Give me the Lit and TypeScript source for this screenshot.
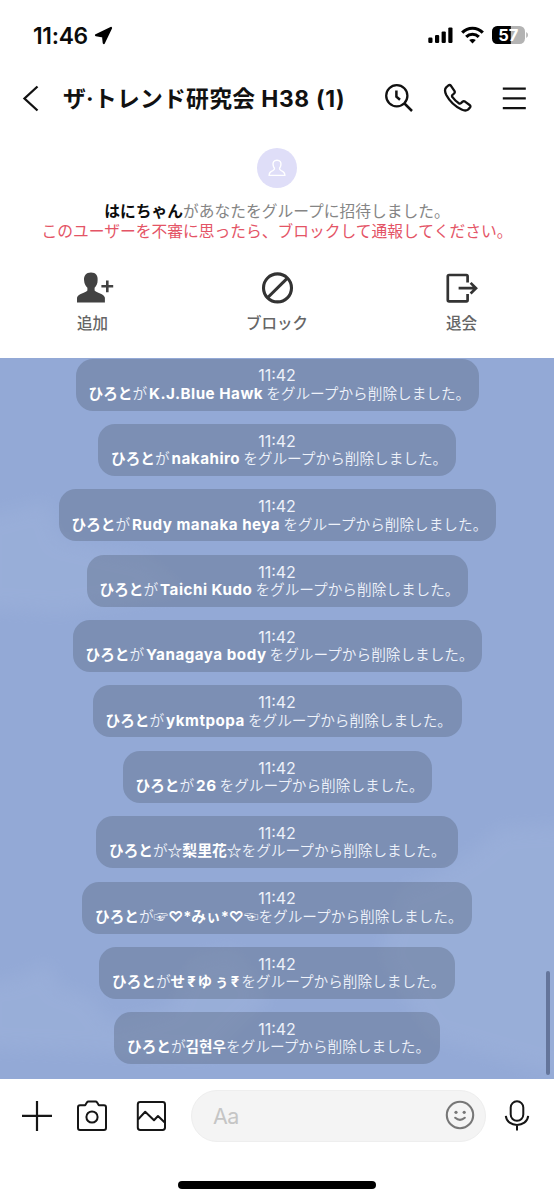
import { LitElement, html, css } from "lit";
import { customElement, property } from "lit/decorators.js";
import { classMap } from "lit/directives/class-map.js";

interface Removal {
  name: string;
  width: number;
  script: "latin" | "kanji" | "symbols" | "spaced" | "hangul";
}

const REMOVALS: Removal[] = [
  { name: "K.J.Blue Hawk", width: 403, script: "latin" },
  { name: "nakahiro", width: 358, script: "latin" },
  { name: "Rudy manaka heya", width: 437, script: "latin" },
  { name: "Taichi Kudo", width: 381, script: "latin" },
  { name: "Yanagaya body", width: 409, script: "latin" },
  { name: "ykmtpopa", width: 369, script: "latin" },
  { name: "26", width: 309, script: "latin" },
  { name: "☆梨里花☆", width: 362, script: "kanji" },
  { name: "☞♡*みぃ*♡☜", width: 390, script: "symbols" },
  { name: "せ₹ゆぅ₹", width: 356, script: "spaced" },
  { name: "김현우", width: 326, script: "hangul" },
];

@customElement("status-bar")
class StatusBar extends LitElement {
  static styles = css`
    :host { display: flex; justify-content: space-between; align-items: center; height: 70px; padding: 0 26px 0 33px; box-sizing: border-box; }
    .left, .right { display: flex; align-items: center; }
    .left { gap: 6px; }
    .right { gap: 8px; }
    .time { font: 600 22.8px/28px Inter, sans-serif; letter-spacing: -0.3px; color: #0b0b0b; padding-top: 1px; }
    svg { display: block; }
    .level { font: 700 16.5px Inter, sans-serif; }
  `;
  render() {
    return html`
      <div class="left">
        <span class="time">11:46</span>
        <svg width="19" height="19" viewBox="0 0 19 19"><path d="M17 2 L9.8 17 L9.1 10.3 L2 9.2 Z" fill="#000" stroke="#000" stroke-width="2.2" stroke-linejoin="round" /></svg>
      </div>
      <div class="right">
        <svg width="25" height="18" viewBox="0 0 25 18">
          <rect x="0.3" y="11.5" width="4.2" height="5.5" rx="1.2" /><rect x="7" y="8.9" width="4.2" height="8.1" rx="1.2" />
          <rect x="13.6" y="5.4" width="4.2" height="11.6" rx="1.2" /><rect x="20.3" y="1.4" width="4.2" height="15.6" rx="1.2" />
        </svg>
        <svg width="23" height="18" viewBox="0 0 23 18" fill="none" stroke="#000" stroke-width="3.2">
          <path d="M1.2 6.6 C7 0.8 16 0.8 21.8 6.6" /><path d="M5.2 10.8 C8.8 7.4 14.2 7.4 17.8 10.8" />
          <path d="M11.5 17.4 L8.2 14.1 C10 12.6 13 12.6 14.8 14.1 Z" fill="#000" stroke="none" />
        </svg>
        <svg width="36" height="18" viewBox="0 0 36 18">
          <defs><clipPath id="full"><rect x="0" y="0" width="33" height="18" rx="5.4" /></clipPath></defs>
          <g clip-path="url(#full)"><rect width="33" height="18" fill="#b3b3b3" /><rect width="18.8" height="18" fill="#000" /></g>
          <path d="M34.2 6 Q36 7 36 9 Q36 11 34.2 12 Z" fill="#b3b3b3" />
          <text class="level" x="16.3" y="15" text-anchor="middle" fill="#fff">57</text>
        </svg>
      </div>`;
  }
}

@customElement("chat-header")
class ChatHeader extends LitElement {
  static styles = css`
    :host { display: flex; align-items: center; height: 56px; padding: 0 27px 0 22px; box-sizing: border-box; }
    .title { margin: 0 auto 0 23px; padding-top: 2px; white-space: nowrap; color: #111; font: 700 22.8px/32px Inter, "Noto Sans CJK JP", sans-serif; letter-spacing: 0.25px; }
    .tag { letter-spacing: 0.65px; }
    .actions { display: flex; gap: 29px; align-items: center; }
    svg { display: block; fill: none; stroke: #111; stroke-width: 2.3; }
  `;
  render() {
    return html`
      <svg width="18" height="28" viewBox="0 0 18 28"><path d="M15.5 2.5 L2.5 14.5 L15.5 26.5" /></svg>
      <div class="title">ザ·トレンド研究会<span class="tag"> H38 (1)</span></div>
      <div class="actions">
        <svg width="30" height="30" viewBox="0 0 30 30">
          <circle cx="12.8" cy="12.8" r="10.6" /><path d="M20.5 20.5 L28 28" stroke-width="2.5" /><path d="M12.4 7.6 V13.6 L16 16.8" stroke-width="2.5" />
        </svg>
        <svg width="30" height="30" viewBox="0 0 30 30">
          <path stroke-linejoin="round" d="M3.2 4.4 L5.3 2.5 Q6.8 1.4 8 2.8 L11.4 7.8 Q12.3 9.4 11.1 10.5 L9.4 12 Q8.6 13 9.5 14.2 Q12.2 18 15.8 20.2 Q17 21 18 20.2 L19.6 18.7 Q20.7 17.8 22 18.6 L26.6 22 Q28.1 23.2 26.9 24.6 L25 26.6 Q22.6 28.4 18.6 26.5 Q8.4 21.6 3.3 12 Q0.8 7 3.2 4.4 Z" />
        </svg>
        <svg width="25" height="26" viewBox="0 0 25 26"><path d="M0.8 3.7 H23.8 M0.8 13.4 H23.8 M0.8 23.2 H23.8" stroke-width="2.2" /></svg>
      </div>`;
  }
}

@customElement("invite-panel")
class InvitePanel extends LitElement {
  static styles = css`
    :host { display: flex; flex-direction: column; align-items: center; height: 232px; padding-top: 22px; box-sizing: border-box; font-family: "Noto Sans CJK JP", sans-serif; }
    .avatar { width: 40px; height: 40px; border-radius: 50%; background: #dfdef8; display: grid; place-items: center; }
    .copy { margin-top: 13px; text-align: center; font-size: 15.75px; line-height: 20px; color: #858585; white-space: nowrap; }
    .copy b { color: #0c0c0c; font-weight: 700; }
    .warning { color: #e45466; }
    .actions { display: grid; grid-template-columns: repeat(3, 184.5px); margin-top: 28px; }
    .action { display: flex; flex-direction: column; align-items: center; gap: 5px; font-size: 15.5px; line-height: 24px; color: #666; font-weight: 500; }
    svg { display: block; }
  `;
  render() {
    return html`
      <div class="avatar">
        <svg width="18" height="18" viewBox="0 0 18 18" fill="none" stroke="#fff" stroke-width="1.4" stroke-linejoin="round">
          <path d="M9 1.2 C5.8 1.2 4.7 3.5 5.1 6 C5.3 7.5 5.8 8.4 6.5 9.2 C6.7 10.6 6.2 11 4.8 11.6 C2.4 12.5 1.2 13.4 1.1 16.4 H16.9 C16.8 13.4 15.6 12.5 13.2 11.6 C11.8 11 11.3 10.6 11.5 9.2 C12.2 8.4 12.7 7.5 12.9 6 C13.3 3.5 12.2 1.2 9 1.2 Z" />
        </svg>
      </div>
      <div class="copy">
        <div><b>はにちゃん</b>があなたをグループに招待しました。</div>
        <div class="warning">このユーザーを不審に思ったら、ブロックして通報してください。</div>
      </div>
      <div class="actions">
        <div class="action">
          <svg width="44" height="36" viewBox="0 0 44 36">
            <path fill="#424242" d="M20 3.5 C15 3.5 12.6 7 13.1 11.5 C13.3 14.5 14.4 16.9 16.4 18.8 V21.5 C15.2 23.8 6.5 24.7 6 28.8 V33.6 H33.9 V28.8 C33.4 24.7 25.1 23.8 23.6 21.5 V18.8 C25.5 16.9 26.6 14.5 26.6 11.5 C27.1 7 25 3.5 20 3.5 Z" />
            <path stroke="#424242" stroke-width="2.6" d="M30.4 17.3 H42.2 M36.3 11.4 V23.2" />
          </svg>追加
        </div>
        <div class="action">
          <svg width="36" height="36" viewBox="0 0 36 36" fill="none" stroke="#333" stroke-width="3.1"><circle cx="18.5" cy="18.9" r="14" /><path d="M8.8 28.5 L28.4 9.1" /></svg>ブロック
        </div>
        <div class="action">
          <svg width="36" height="36" viewBox="0 0 36 36" fill="none" stroke="#333" stroke-width="2.7">
            <path stroke-linejoin="round" d="M23.6 13.6 V7.2 Q23.6 6 22.4 6 H5.1 Q3.8 6 3.8 7.2 V31 Q3.8 32.3 5.1 32.3 H22.4 Q23.6 32.3 23.6 31 V25" />
            <path d="M14.6 19.2 H32 M26.6 13.9 L32 19.2 L26.6 24.5" />
          </svg>退会
        </div>
      </div>`;
  }
}

@customElement("system-notice")
class SystemNotice extends LitElement {
  @property({ attribute: false }) item!: Removal;
  static styles = css`
    :host { display: flex; justify-content: center; }
    .pill { height: 52px; box-sizing: border-box; padding: 7.8px 0 0 13px; border-radius: 17px; background: rgba(82, 97, 120, 0.36); color: #eef2fa; font: 400 14.65px/18.3px Inter, "Noto Sans CJK JP", "Noto Sans CJK KR", "DejaVu Sans", sans-serif; white-space: nowrap; }
    .time { text-align: center; margin-left: -13px; font-size: 16px; }
    .body { font-weight: 350; }
    b { font-weight: 700; color: #fff; }
    .latin { margin: 0 3px 0 2px; font-size: 15.2px; letter-spacing: 0.5px; }
    .kanji { font-family: "Noto Sans CJK JP", sans-serif; font-size: 14.8px; line-height: 1; }
    .spaced { letter-spacing: 2px; }
    .symbols { letter-spacing: 0; }
  `;
  render() {
    const { name, width, script } = this.item;
    return html`<div class="pill" style="width:${width}px">
      <div class="time">11:42</div>
      <div class="body"><b>ひろと</b>が<b class=${classMap({ [script]: true })}>${name}</b>をグループから削除しました。</div>
    </div>`;
  }
}

@customElement("message-bar")
class MessageBar extends LitElement {
  static styles = css`
    :host { display: flex; flex-direction: column; align-items: center; height: 121px; padding-top: 11px; box-sizing: border-box; background: #fff; }
    .row { display: flex; align-items: center; width: 100%; box-sizing: border-box; padding: 0 22px; }
    .tools { display: flex; gap: 25px; }
    .field { display: flex; align-items: center; justify-content: space-between; width: 295px; height: 52px; box-sizing: border-box; margin-left: 25px; padding: 0 10.5px 2px 21px; border: 1px solid #eee; border-radius: 26px; background: #f4f4f4; }
    .hint { color: #c5c5c5; font: 400 21.5px/28px Inter, sans-serif; letter-spacing: -0.6px; padding-top: 2px; }
    .mic { margin-left: auto; }
    .home { width: 198px; height: 7.5px; border-radius: 4px; background: #000; margin-top: 39px; }
    svg { display: block; fill: none; stroke: #161616; stroke-width: 2; stroke-linejoin: round; }
    .smile { stroke: #777; stroke-width: 2.1; }
  `;
  render() {
    return html`
      <div class="row">
        <div class="tools">
          <svg width="30" height="32" viewBox="0 0 30 32"><path d="M15 1 V31 M0 15.8 H30" stroke-width="2.2" /></svg>
          <svg width="30" height="32" viewBox="0 0 30 32"><path d="M3 5.2 H8.2 L10 2.3 Q10.5 1.6 11.4 1.6 H18.6 Q19.5 1.6 20 2.3 L21.8 5.2 H27 Q29 5.2 29 7.2 V28 Q29 30 27 30 H3 Q1 30 1 28 V7.2 Q1 5.2 3 5.2 Z" /><circle cx="15" cy="17" r="5.6" /></svg>
          <svg width="34" height="32" viewBox="0 0 34 32"><rect x="5.8" y="2" width="27.2" height="28" rx="2.4" /><path d="M6 19.5 L13.2 11.8 L22 20.3 L26 16 L33 22.8" /></svg>
        </div>
        <div class="field">
          <span class="hint">Aa</span>
          <svg class="smile" width="30" height="30" viewBox="0 0 30 30"><circle cx="15" cy="15" r="13.2" /><path d="M10.2 17.8 Q15 22 19.8 17.8" stroke-linecap="round" /><circle cx="11" cy="12.3" r="1.6" fill="#777" stroke="none" /><circle cx="19.2" cy="12.3" r="1.6" fill="#777" stroke="none" /></svg>
        </div>
        <svg class="mic" width="30" height="34" viewBox="0 0 30 34"><rect x="8.7" y="2.3" width="12.6" height="19.5" rx="6.3" /><path d="M3.8 16.8 C5 29 25 29 26.2 16.8 M15 26 V31.5" /></svg>
      </div>
      <div class="home"></div>`;
  }
}

@customElement("app-root")
class AppRoot extends LitElement {
  static styles = css`
    :host { display: flex; flex-direction: column; width: 554px; height: 1200px; overflow: hidden; background: #fff; }
    .timeline { position: relative; display: flex; flex-direction: column; gap: 13.36px; height: 721px; padding-top: 0.7px; box-sizing: border-box; overflow: hidden; background: #93a9d6; }
    .sky { position: absolute; inset: 0; }
    system-notice { position: relative; }
    .scroll { position: absolute; right: 4px; top: 613px; width: 4.5px; height: 104px; border-radius: 3px; background: #64759b; }
  `;
  render() {
    return html`
      <status-bar></status-bar>
      <chat-header></chat-header>
      <invite-panel></invite-panel>
      <div class="timeline">
        <svg class="sky" width="554" height="721" viewBox="0 0 554 721">
          <defs><filter id="soft" x="-30%" y="-30%" width="160%" height="160%"><feGaussianBlur stdDeviation="9" /></filter></defs>
          <g filter="url(#soft)" fill="#a4b8de" opacity="0.34">
            <path d="M-20 160 L18 150 L48 143 L60 180 L150 200 L190 235 L60 255 L-20 250 Z" />
            <path d="M-20 625 L15 620 L50 604 L58 628 L90 638 L110 665 L170 650 L190 600 L235 590 L270 640 L210 700 L-20 690 Z" />
            <path d="M600 465 L500 470 L470 495 L430 520 L400 530 L380 600 L430 680 L600 730 Z" />
          </g>
        </svg>
        ${REMOVALS.map((item) => html`<system-notice .item=${item}></system-notice>`)}
        <div class="scroll"></div>
      </div>
      <message-bar></message-bar>`;
  }
}
